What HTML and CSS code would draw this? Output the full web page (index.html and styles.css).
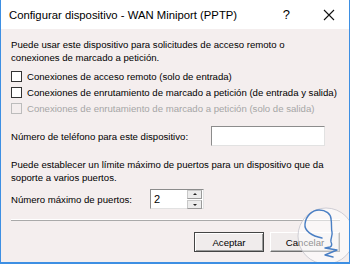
FILE: index.html
```html
<!DOCTYPE html>
<html lang="es">
<head>
    <meta charset="UTF-8">
    <title>Configurar dispositivo - WAN Miniport (PPTP)</title>
    <link rel="stylesheet" href="styles.css">
</head>
<body>
    <div class="window">
        <div class="titlebar">
            <span class="title">Configurar dispositivo - WAN Miniport (PPTP)</span>
            <span class="help">?</span>
            <svg class="close" width="12" height="12" viewBox="0 0 12 12">
                <path d="M1 1 L11 11 M11 1 L1 11" stroke="#111" stroke-width="1.1" fill="none"/>
            </svg>
        </div>

        <div class="content">
            <p class="intro">Puede usar este dispositivo para solicitudes de acceso remoto o<br>conexiones de marcado a petición.</p>

            <label class="check"><span class="box"></span>Conexiones de acceso remoto (solo de entrada)</label>
            <label class="check"><span class="box"></span>Conexiones de enrutamiento de marcado a petición (de entrada y salida)</label>
            <label class="check disabled"><span class="box"></span>Conexiones de enrutamiento de marcado a petición (solo de salida)</label>

            <div class="field phone">
                <span class="label">Número de teléfono para este dispositivo:</span>
                <div class="textbox wide"></div>
            </div>

            <p class="limit">Puede establecer un límite máximo de puertos para un dispositivo que da<br>soporte a varios puertos.</p>

            <div class="field ports">
                <span class="label">Número máximo de puertos:</span>
                <div class="textbox spin">
                    <span class="value">2</span>
                    <div class="arrows">
                        <span class="arrow up"></span>
                        <span class="arrow down"></span>
                    </div>
                </div>
            </div>

            <div class="separator"></div>

            <div class="buttons">
                <button class="btn default">Aceptar</button>
                <button class="btn">Cancelar</button>
            </div>
        </div>

        <!-- watermark over the corner -->
        <svg class="watermark" width="60" height="60" viewBox="0 0 60 60">
            <circle cx="30" cy="30" r="28" fill="rgba(255,255,255,0.55)" stroke="rgba(190,190,200,0.7)" stroke-width="1"/>
            <path d="M26 32 C16 30 8 25 9 18 C10 9 17 4 23 4 C30 4 35 8 35 13 C36 18 35 22 36 26 C37 30 34 33 35 36 C36 38 36 40 34 41 L29 42 L41 44 L29 49 L37 51"
                  stroke="#4a7fc4" stroke-width="1.4" fill="none" stroke-linejoin="round" stroke-linecap="round"/>
        </svg>
    </div>
</body>
</html>
```

FILE: styles.css
```css
body {
    margin: 0;
    padding: 0;
    font-family: "Liberation Sans", Arial, sans-serif;
    background-color: #fff;
}

.window {
    position: relative;
    width: 350px;
    height: 264px;
    box-sizing: border-box;
    background-color: #f4eeee;
    border-left: 1px solid #3d8fe3;
    border-right: 1px solid #3d8fe3;
    border-bottom: 2px solid #3d8fe3;
    overflow: hidden;
}

.titlebar {
    height: 29px;
    background-color: #fff;
    display: flex;
    align-items: center;
    padding-left: 8px;
}

.title {
    font-size: 11.3px;
    color: #000;
    flex: 1;
}

.help {
    font-size: 13px;
    margin-right: 33px;
}

.close {
    margin-right: 14px;
}

.content {
    padding: 9px 9px 0 10px;
    font-size: 9.6px;
    color: #000;
    white-space: nowrap;
}

p {
    margin: 0;
    line-height: 13px;
}

.check {
    display: flex;
    align-items: center;
    height: 16px;
}

.intro {
    margin-bottom: 4px;
}

.box {
    width: 9px;
    height: 9px;
    border: 1px solid #333;
    background-color: #fff;
    margin-right: 5px;
}

.check.disabled {
    color: #a6a6a6;
}

.check.disabled .box {
    border-color: #bcbcbc;
    background-color: #f4eeee;
}

.field {
    display: flex;
    align-items: center;
    height: 20px;
}

.phone {
    margin-top: 10px;
}

.phone .label {
    width: 200px;
}

.ports .label {
    width: 139px;
}

.limit {
    margin-top: 12px;
}

.ports {
    margin-top: 5px;
}

.textbox {
    box-sizing: border-box;
    height: 20px;
    background-color: #fff;
    border-top: 1px solid #8c8c8c;
    border-left: 1px solid #8c8c8c;
    border-right: 1px solid #e2e2e2;
    border-bottom: 1px solid #e2e2e2;
}

.wide {
    width: 114px;
}

.spin {
    width: 54px;
    display: flex;
    align-items: center;
    padding: 0 1px 0 3px;
}

.value {
    flex: 1;
    font-size: 11px;
}

.arrows {
    display: flex;
    flex-direction: column;
    gap: 1px;
}

.arrow {
    width: 13px;
    height: 7px;
    background-color: #ececec;
    border: 1px solid #c8c8c8;
    border-right-color: #9a9a9a;
    border-bottom-color: #9a9a9a;
    position: relative;
}

.arrow::after {
    content: "";
    position: absolute;
    left: 5px;
    border-left: 2px solid transparent;
    border-right: 2px solid transparent;
}

.arrow.up::after {
    top: 2px;
    border-bottom: 2px solid #222;
}

.arrow.down::after {
    top: 3px;
    border-top: 2px solid #222;
}

.separator {
    margin-top: 10px;
    border-top: 1px solid #fff;
    border-bottom: 1px solid #a9a9a9;
}

.buttons {
    display: flex;
    justify-content: flex-end;
    gap: 6px;
    margin-top: 11px;
}

.btn {
    width: 70px;
    height: 20px;
    padding: 0;
    font-family: "Liberation Sans", Arial, sans-serif;
    font-size: 9.6px;
    color: #000;
    background-color: #f0ecec;
    border: 1px solid;
    border-color: #fff #6e6e6e #6e6e6e #fff;
    box-shadow: inset -1px -1px 0 #b4b4b4;
}

.btn.default {
    border-color: #444;
    box-shadow: inset 1px 1px 0 #fff, inset -1px -1px 0 #9a9a9a;
}

.watermark {
    position: absolute;
    left: 295px;
    top: 206px;
}
```
